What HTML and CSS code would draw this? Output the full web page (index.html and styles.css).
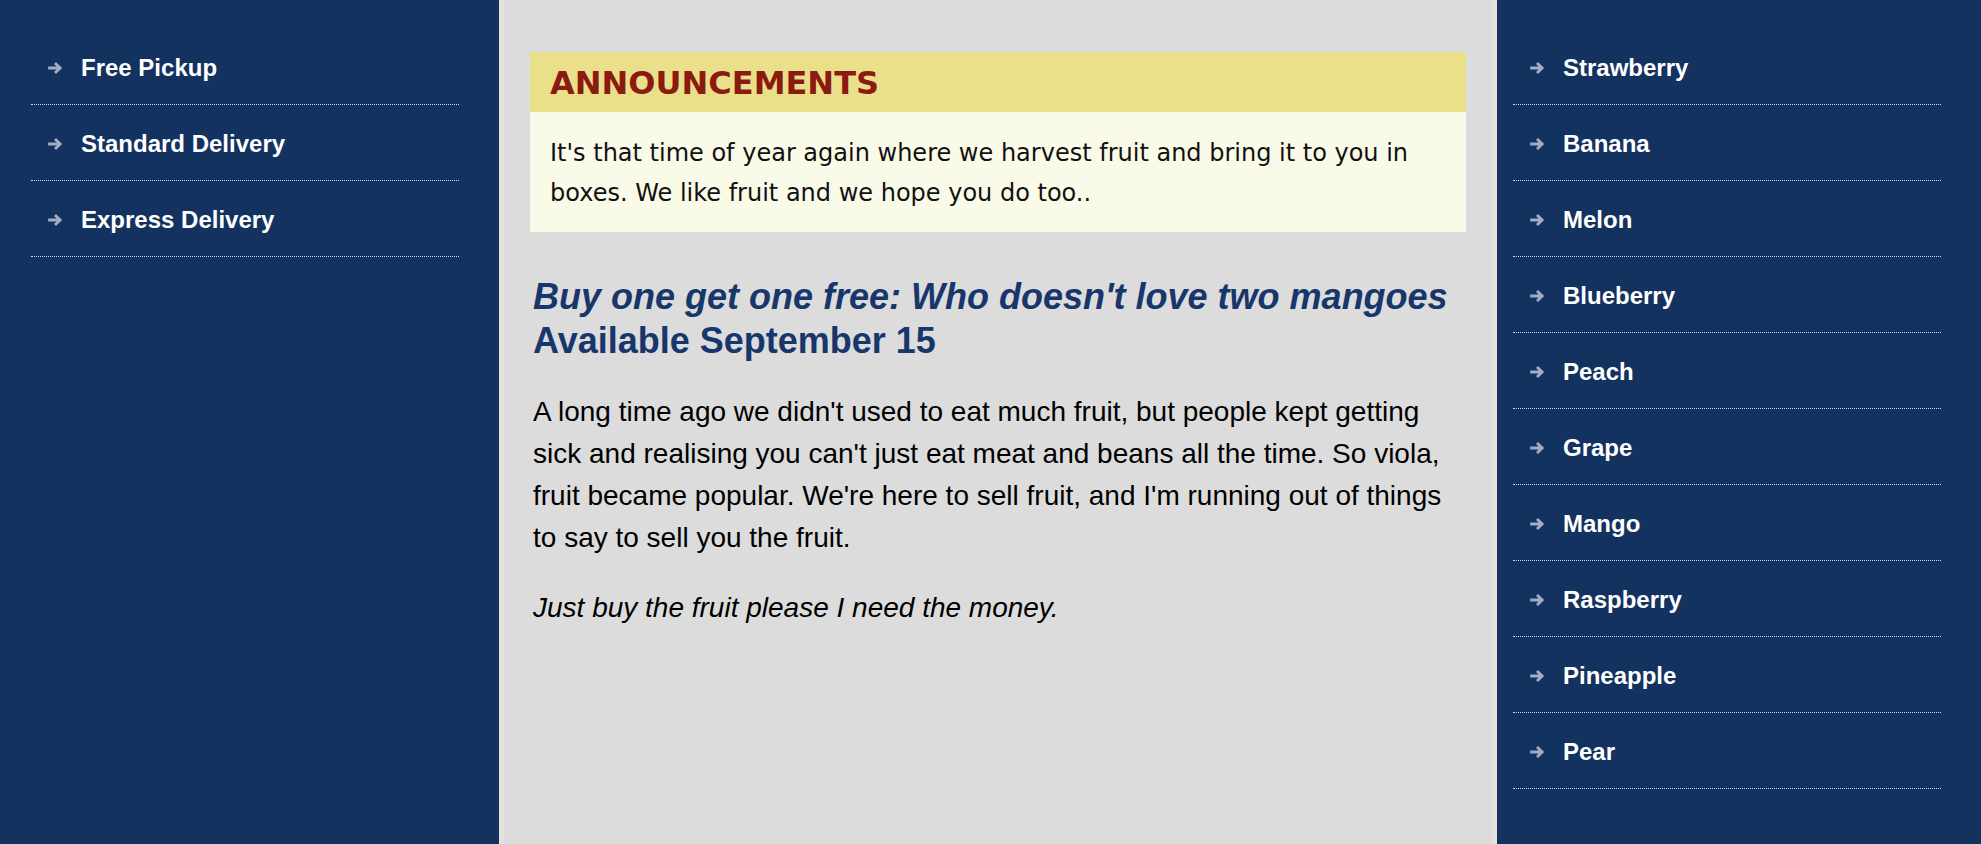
FILE: index.html
```html
<!DOCTYPE html>
<html lang="en">
<head>
<meta charset="utf-8">
<title>Fruit</title>
<link rel="stylesheet" href="styles.css">
</head>
<body>
<div class="page">
  <nav class="sidebar sidebar-left">
    <ul class="menu">
      <li class="menu-item"><svg class="arrow" viewBox="0 0 14 12"><path d="M1 6H11.5M7 1.6L11.5 6L7 10.4"/></svg><a href="#">Free Pickup</a></li>
      <li class="menu-item"><svg class="arrow" viewBox="0 0 14 12"><path d="M1 6H11.5M7 1.6L11.5 6L7 10.4"/></svg><a href="#">Standard Delivery</a></li>
      <li class="menu-item"><svg class="arrow" viewBox="0 0 14 12"><path d="M1 6H11.5M7 1.6L11.5 6L7 10.4"/></svg><a href="#">Express Delivery</a></li>
    </ul>
  </nav>
  <main class="content">
    <section class="announce">
      <h1 class="announce-title">ANNOUNCEMENTS</h1>
      <p class="announce-body">It's that time of year again where we harvest fruit and bring it to you in boxes. We like fruit and we hope you do too..</p>
    </section>
    <h2 class="headline"><em>Buy one get one free: Who doesn't love two mangoes</em><br>Available September 15</h2>
    <p class="text">A long time ago we didn't used to eat much fruit, but people kept getting sick and realising you can't just eat meat and beans all the time. So viola, fruit became popular. We're here to sell fruit, and I'm running out of things to say to sell you the fruit.</p>
    <p class="text"><em>Just buy the fruit please I need the money.</em></p>
  </main>
  <nav class="sidebar sidebar-right">
    <ul class="menu">
      <li class="menu-item"><svg class="arrow" viewBox="0 0 14 12"><path d="M1 6H11.5M7 1.6L11.5 6L7 10.4"/></svg><a href="#">Strawberry</a></li>
      <li class="menu-item"><svg class="arrow" viewBox="0 0 14 12"><path d="M1 6H11.5M7 1.6L11.5 6L7 10.4"/></svg><a href="#">Banana</a></li>
      <li class="menu-item"><svg class="arrow" viewBox="0 0 14 12"><path d="M1 6H11.5M7 1.6L11.5 6L7 10.4"/></svg><a href="#">Melon</a></li>
      <li class="menu-item"><svg class="arrow" viewBox="0 0 14 12"><path d="M1 6H11.5M7 1.6L11.5 6L7 10.4"/></svg><a href="#">Blueberry</a></li>
      <li class="menu-item"><svg class="arrow" viewBox="0 0 14 12"><path d="M1 6H11.5M7 1.6L11.5 6L7 10.4"/></svg><a href="#">Peach</a></li>
      <li class="menu-item"><svg class="arrow" viewBox="0 0 14 12"><path d="M1 6H11.5M7 1.6L11.5 6L7 10.4"/></svg><a href="#">Grape</a></li>
      <li class="menu-item"><svg class="arrow" viewBox="0 0 14 12"><path d="M1 6H11.5M7 1.6L11.5 6L7 10.4"/></svg><a href="#">Mango</a></li>
      <li class="menu-item"><svg class="arrow" viewBox="0 0 14 12"><path d="M1 6H11.5M7 1.6L11.5 6L7 10.4"/></svg><a href="#">Raspberry</a></li>
      <li class="menu-item"><svg class="arrow" viewBox="0 0 14 12"><path d="M1 6H11.5M7 1.6L11.5 6L7 10.4"/></svg><a href="#">Pineapple</a></li>
      <li class="menu-item"><svg class="arrow" viewBox="0 0 14 12"><path d="M1 6H11.5M7 1.6L11.5 6L7 10.4"/></svg><a href="#">Pear</a></li>
    </ul>
  </nav>
</div>
</body>
</html>
```
FILE: styles.css
```css
html, body {
  margin: 0;
  padding: 0;
  height: 100%;
}
body {
  font-family: "Liberation Sans", Arial, sans-serif;
  background: #dcdcdc;
}
.page {
  display: grid;
  grid-template-columns: 499px 998px 1fr;
  min-height: 100vh;
}
.sidebar {
  background: #13325f;
}
.sidebar-left {
  padding: 29px 40px 0 31px;
}
.sidebar-right {
  padding: 29px 40px 0 16px;
}
.menu {
  list-style: none;
  margin: 0;
  padding: 0;
}
.menu-item {
  display: flex;
  align-items: center;
  padding: 25px 0 22px 16px;
  border-bottom: 1px dotted #d8dde8;
  line-height: 28px;
}
.menu-item a {
  color: #ffffff;
  text-decoration: none;
  font-weight: bold;
  font-size: 24px;
}
.arrow {
  width: 16px;
  height: 14px;
  margin-right: 18px;
  flex: none;
  fill: none;
  stroke: #a3aec6;
  stroke-width: 2.5;
  stroke-linecap: butt;
  stroke-linejoin: miter;
  filter: blur(0.45px);
}
.content {
  background: #dcdcdc;
  border-left: 5px solid #e3e3dc;
  border-right: 5px solid #e3e3dc;
  padding: 52px 26px 0;
}
.announce {
  margin: 0;
}
.announce-title {
  margin: 0;
  background: #ebe08a;
  color: #8b1a10;
  font-family: "DejaVu Sans", Verdana, sans-serif;
  font-weight: bold;
  font-size: 32px;
  line-height: 40px;
  padding: 11px 20px 9px;
}
.announce-body {
  margin: 0;
  background: #fafae8;
  color: #111111;
  font-family: "DejaVu Sans", Verdana, sans-serif;
  font-size: 24px;
  line-height: 40px;
  padding: 21px 20px 19px;
}
.headline {
  margin: 43px 0 28px 3px;
  color: #17366b;
  font-size: 36px;
  font-weight: bold;
  line-height: 44px;
}
.text {
  margin: 28px 0 28px 3px;
  color: #000000;
  font-size: 28px;
  line-height: 42px;
}
```
